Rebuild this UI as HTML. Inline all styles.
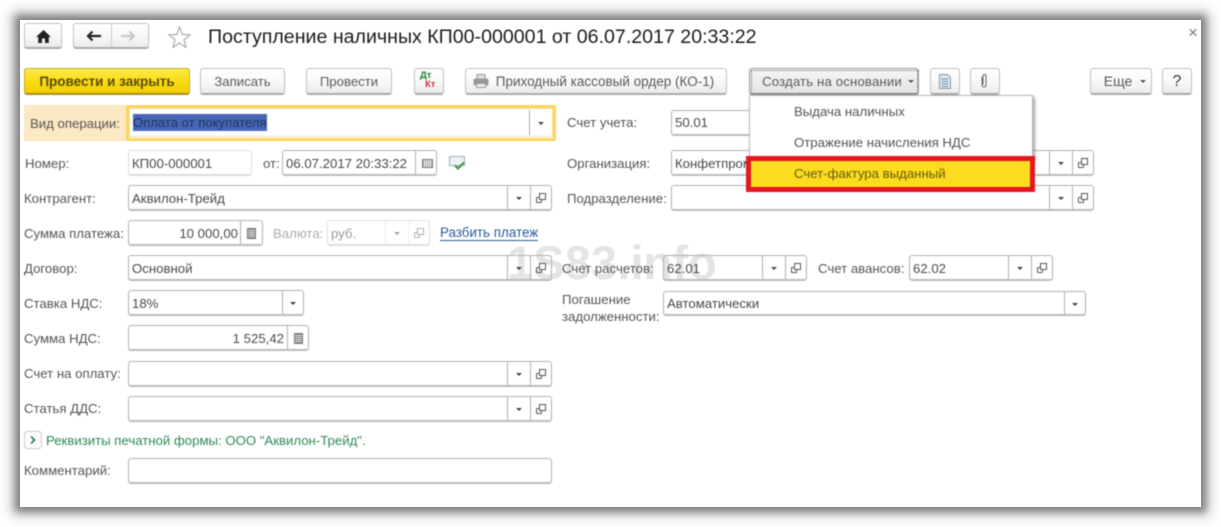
<!DOCTYPE html>
<html><head><meta charset="utf-8">
<style>
html,body{margin:0;padding:0;background:#fff;width:1221px;height:527px;overflow:hidden}
body{font-family:"Liberation Sans",sans-serif;font-size:13.2px;color:#555}
#shadow{position:absolute;left:20px;top:20px;width:1181px;height:487px;box-shadow:0 0 8px 5px #7d7d7d,0 0 12px 10px rgba(195,195,195,.6)}
#p{position:absolute;left:20px;top:20px;width:1181px;height:487px;background:#fff}
#w{position:absolute;left:0;top:0;width:1221px;height:527px;filter:blur(.4px);overflow:hidden}
.a{position:absolute;white-space:nowrap}
.l{position:absolute;white-space:nowrap;line-height:16px;margin-top:1px}
.b{position:absolute;box-sizing:border-box;height:27px;top:68px;border:1px solid #c0c0c0;border-bottom:2px solid #aaa;border-radius:3px;background:linear-gradient(#fff,#f8f8f8 55%,#ebebeb);text-align:center;line-height:25px;color:#5a5a5a;white-space:nowrap}
.f{position:absolute;box-sizing:border-box;height:26px;border:1px solid #b0b0b0;border-bottom:2px solid #bbb;border-radius:3px;background:#fff;line-height:25px;padding-left:3px;color:#4a4a4a;white-space:nowrap;overflow:hidden;font-size:13.200px}
.c{position:absolute;top:0;bottom:0;box-sizing:border-box;border-left:1px solid #b0b0b0;background:#fff}
.c1{right:0;width:21px}.c2{right:21px;width:23px}
.ar:after{content:"";position:absolute;left:50%;top:11px;margin-left:-3px;border:3px solid transparent;border-top:3px solid #444;border-bottom:0}
.op:before{content:"";position:absolute;left:5px;top:11px;width:4px;height:4px;border:1px solid #555;border-radius:1px}
.op:after{content:"";position:absolute;left:8px;top:7px;width:5px;height:5px;border:1px solid #555;background:#fff}
.calc:after{content:"";position:absolute;left:6px;top:7px;width:7px;height:9px;border:1px solid #777;background:repeating-linear-gradient(#888 0 1px,#ddd 1px 2px)}
.cal:after{content:"";position:absolute;left:6px;top:8px;width:9px;height:7px;border:1px solid #777;background:repeating-linear-gradient(90deg,#aaa 0 1px,#eee 1px 2px)}
</style></head><body>
<div id="shadow"></div>
<div id="p"></div>
<div id="w">

<!-- top nav -->
<div class="b" style="left:24px;top:23px;width:38px;height:26px"></div>
<svg class="a" style="left:36px;top:30px" width="15" height="13" viewBox="0 0 15 13"><path d="M7.500 0L0 7h2.200v6h3.800V8.500h3V13h3.800V7H15z" fill="#222"/></svg>
<div class="b" style="left:73px;top:23px;width:76px;height:26px"></div>
<div class="a" style="left:111px;top:24px;width:1px;height:23px;background:#ccc"></div>
<svg class="a" style="left:85px;top:30px" width="16" height="12" viewBox="0 0 16 12"><path d="M16 6H3M7.500 1.500L3 6l4.500 4.500" fill="none" stroke="#222" stroke-width="2.200"/></svg>
<svg class="a" style="left:121px;top:30px" width="16" height="12" viewBox="0 0 16 12"><path d="M0 6h13M8.500 1.500L13 6l-4.500 4.500" fill="none" stroke="#c8c8c8" stroke-width="2.200"/></svg>
<svg class="a" style="left:168px;top:26px" width="23" height="22" viewBox="0 0 23 22"><path d="M11.500 1l2.800 7.400 7.700.4-6 5 2 7.600-6.500-4.300-6.500 4.300 2-7.600-6-5 7.700-.4z" fill="#fff" stroke="#9a9a9a" stroke-width="1"/></svg>
<div class="a" style="left:208px;top:26px;font-size:19.600px;line-height:22px;color:#1b1b1b">Поступление наличных КП00-000001 от 06.07.2017 20:33:22</div>
<div class="a" style="left:1188px;top:24px;font-size:17px;line-height:18px;color:#777">×</div>

<!-- toolbar -->
<div class="b" style="left:24px;width:166px;background:linear-gradient(#fce94a,#fbdc14 50%,#f3cc00);border-color:#c9ab2a;border-bottom-color:#a8902a;color:#5a4d10;font-weight:bold;font-size:13.500px">Провести и закрыть</div>
<div class="b" style="left:200px;width:85px">Записать</div>
<div class="b" style="left:306px;width:86px">Провести</div>
<div class="b" style="left:414px;width:30px"></div>
<div class="a" style="left:420px;top:71px;font:bold 9.500px/10px 'Liberation Sans',sans-serif;color:#1d7a2d">Дт</div>
<div class="a" style="left:425px;top:80px;font:bold 9.500px/10px 'Liberation Sans',sans-serif;color:#d62a3a">Кт</div>
<div class="b" style="left:465px;width:262px;padding-left:18px;font-size:13.500px">Приходный кассовый ордер (КО-1)</div>
<svg class="a" style="left:473px;top:74px" width="16" height="15" viewBox="0 0 16 15"><rect x="4" y="0.500" width="8" height="5" fill="#ddd" stroke="#999"/><rect x="0.500" y="4.500" width="15" height="7" rx="2" fill="#999"/><rect x="3.500" y="9.500" width="9" height="4" fill="#eee" stroke="#999"/></svg>
<div class="b" style="left:749px;width:170px;border-color:#999;background:linear-gradient(#f6f6f6,#e4e4e4);padding-right:4px;letter-spacing:.15px">Создать на основании</div>
<div class="a" style="left:751px;top:70px;width:165px;height:22px;border:1px dotted #666"></div>
<div class="a" style="left:908px;top:80px;border:3px solid transparent;border-top:3px solid #555;border-bottom:0"></div>
<div class="b" style="left:930px;width:30px"></div>
<svg class="a" style="left:939px;top:74px" width="12" height="15" viewBox="0 0 12 15"><path d="M.5.500h8l3 3v11H.5z" fill="#dbe6ee" stroke="#7f9db0"/><path d="M3 5h6M3 7.500h6M3 10h6M3 12.500h6" stroke="#4e7188" stroke-width="1" stroke-dasharray="1.500 .7"/></svg>
<div class="b" style="left:970px;width:30px"></div>
<svg class="a" style="left:980px;top:73px" width="8" height="16" viewBox="0 0 8 16"><path d="M2 4v8a2 2 0 0 0 4 0V3a1.500 1.500 0 0 0-3 0v8.500" fill="none" stroke="#666" stroke-width="1"/></svg>
<div class="b" style="left:1090px;width:62px;padding-right:6px;font-size:14px">Еще</div>
<div class="a" style="left:1140px;top:80px;border:3px solid transparent;border-top:3px solid #555;border-bottom:0"></div>
<div class="b" style="left:1162px;width:30px;font-size:16px;color:#333">?</div>

<!-- watermark -->
<div class="a" style="left:507px;top:237px;font-size:47.200px;line-height:54px;font-weight:bold;color:#e4e4e4">1S83.info</div>

<!-- left column -->
<div class="a" style="left:24px;top:105px;width:102px;height:36px;background:#fce8c3"></div>
<div class="l" style="left:30px;top:115px">Вид операции:</div>
<div class="a" style="left:126px;top:105px;width:430px;height:36px;box-sizing:border-box;border:3px solid #fbd55c;background:#fff;border-radius:2px"></div>
<div class="a" style="left:129px;top:108px;width:424px;height:29px;box-sizing:border-box;border:1px solid #f0e1b0;background:#fff"></div>
<div class="a" style="left:529px;top:110px;width:1px;height:25px;background:#aaa"></div>
<div class="a" style="left:538px;top:122px;border:3px solid transparent;border-top:3px solid #444;border-bottom:0"></div>
<div class="a" style="left:133px;top:114px;width:134px;height:17px;overflow:hidden;background:#4666b8;color:#24355a;line-height:17px;font-size:13.100px">Оплата от покупателя</div>

<div class="l" style="left:25px;top:155px">Номер:</div>
<div class="f" style="left:128px;top:150px;width:124px;border-color:#ddd">КП00-000001</div>
<div class="l" style="left:263px;top:155px">от:</div>
<div class="f" style="left:282px;top:150px;width:155px">06.07.2017 20:33:22<span class="c cal" style="right:0;width:21px"></span></div>
<svg class="a" style="left:449px;top:156px" width="17" height="15" viewBox="0 0 17 15"><path d="M.5.500h15v9H.5z" fill="#eef2f4" stroke="#9fb2bd"/><path d="M6 9.500l3 3 6-6" fill="none" stroke="#3d9a3d" stroke-width="2.200"/></svg>

<div class="l" style="left:24px;top:190px">Контрагент:</div>
<div class="f" style="left:128px;top:185px;width:424px">Аквилон-Трейд<span class="c c2 ar"></span><span class="c c1 op"></span></div>

<div class="l" style="left:24px;top:225px">Сумма платежа:</div>
<div class="f" style="left:128px;top:220px;width:135px;text-align:right;padding-right:24px">10 000,00<span class="c calc" style="right:0;width:22px"></span></div>
<div class="l" style="left:273px;top:225px;color:#aaa">Валюта:</div>
<div class="f" style="left:327px;top:220px;width:103px;border-color:#ddd;color:#999">руб.<span class="c c2 ar" style="border-color:#ddd;opacity:.5"></span><span class="c c1 op" style="border-color:#ddd;opacity:.45"></span></div>
<div class="a" style="left:440px;top:226px;line-height:14px;font-size:13.400px;color:#2a5a9c;border-bottom:1px solid #2a5a9c">Разбить платеж</div>

<div class="l" style="left:24px;top:260px">Договор:</div>
<div class="f" style="left:128px;top:255px;width:424px;background:transparent">Основной<span class="c c2 ar" style="background:transparent"></span><span class="c c1 op" style="background:transparent"></span></div>

<div class="l" style="left:24px;top:295px">Ставка НДС:</div>
<div class="f" style="left:128px;top:290px;width:176px">18%<span class="c c1 ar"></span></div>

<div class="l" style="left:24px;top:330px">Сумма НДС:</div>
<div class="f" style="left:128px;top:325px;width:181px;text-align:right;padding-right:24px">1 525,42<span class="c calc" style="right:0;width:21px"></span></div>

<div class="l" style="left:24px;top:365px">Счет на оплату:</div>
<div class="f" style="left:128px;top:361px;width:424px"><span class="c c2 ar"></span><span class="c c1 op"></span></div>

<div class="l" style="left:24px;top:400px">Статья ДДС:</div>
<div class="f" style="left:128px;top:396px;width:424px"><span class="c c2 ar"></span><span class="c c1 op"></span></div>

<div class="a" style="left:24px;top:431px;width:18px;height:18px;box-sizing:border-box;border:1px solid #ccc;border-radius:3px;background:#fbfbfb"></div>
<svg class="a" style="left:30px;top:436px" width="6" height="8" viewBox="0 0 6 8"><path d="M1 .500L4.500 4 1 7.500" fill="none" stroke="#2c7a4a" stroke-width="1.600"/></svg>
<div class="l" style="left:46px;top:432px;color:#2f8a58;font-size:13.200px">Реквизиты печатной формы: ООО "Аквилон-Трейд".</div>

<div class="l" style="left:24px;top:462px">Комментарий:</div>
<div class="f" style="left:128px;top:458px;width:424px"></div>

<!-- right column -->
<div class="l" style="left:567px;top:114px">Счет учета:</div>
<div class="f" style="left:671px;top:110px;width:100px;line-height:23px">50.01</div>
<div class="l" style="left:567px;top:155px">Организация:</div>
<div class="f" style="left:671px;top:150px;width:423px">Конфетпром<span class="c c2 ar"></span><span class="c c1 op"></span></div>
<div class="l" style="left:567px;top:190px">Подразделение:</div>
<div class="f" style="left:671px;top:185px;width:423px"><span class="c c2 ar"></span><span class="c c1 op"></span></div>

<div class="l" style="left:562px;top:260px">Счет расчетов:</div>
<div class="f" style="left:663px;top:255px;width:144px;background:transparent">62.01<span class="c c2 ar"></span><span class="c c1 op"></span></div>
<div class="l" style="left:818px;top:260px">Счет авансов:</div>
<div class="f" style="left:909px;top:255px;width:144px">62.02<span class="c c2 ar"></span><span class="c c1 op"></span></div>
<div class="l" style="left:562px;top:291px">Погашение</div>
<div class="l" style="left:562px;top:308px">задолженности:</div>
<div class="f" style="left:663px;top:291px;width:423px;height:25px;line-height:23px">Автоматически<span class="c c1 ar"></span></div>

<!-- dropdown -->
<div class="a" style="left:749px;top:95px;width:284px;height:64px;box-sizing:border-box;background:#fff;border:1px solid #b5b5b5;box-shadow:2px 2px 3px rgba(0,0,0,.35)"></div>
<div class="l" style="left:794px;top:103px">Выдача наличных</div>
<div class="l" style="left:794px;top:134px">Отражение начисления НДС</div>
<div class="a" style="left:746px;top:156px;width:289px;height:36px;box-sizing:border-box;border:5px solid #e4161f;background:#fbdc1e"></div>
<div class="l" style="left:794px;top:165px;color:#6a5a14">Счет-фактура выданный</div>

</div>
</body></html>
